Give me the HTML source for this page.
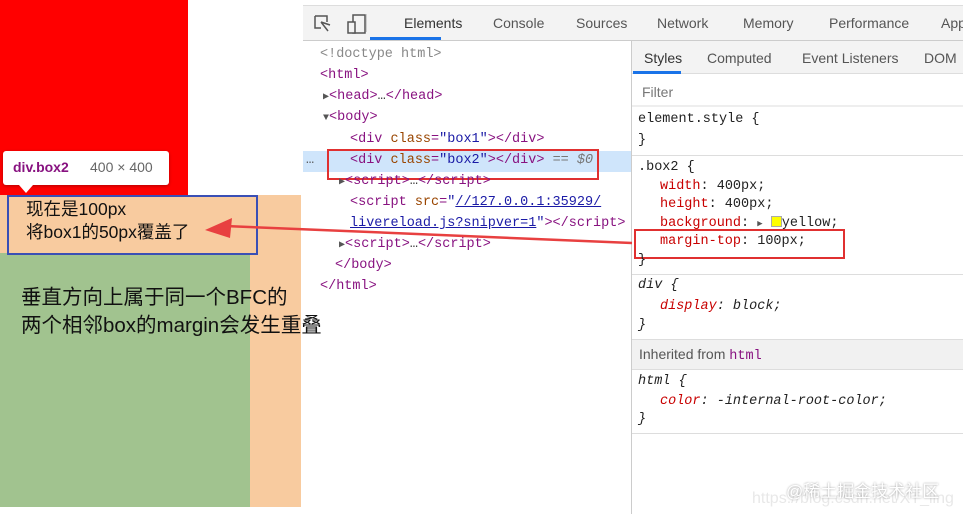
<!DOCTYPE html><html><head><style>
*{margin:0;padding:0;box-sizing:border-box}
body{width:963px;height:514px;position:relative;background:#fff;font-family:"Liberation Sans","Noto Sans CJK SC",sans-serif;overflow:hidden}
.a{position:absolute;white-space:nowrap}
.m{font-family:"Liberation Mono","DejaVu Sans Mono",monospace;font-size:13.5px}
.t{color:#881280}.at{color:#994500}.v{color:#1a1aa6}.g{color:#888}
.p{color:#c80000}
.tab{font-size:14px;color:#555;top:15px}
</style></head><body>
<div class="a" style="left:0;top:0;width:188px;height:196px;background:#f00"></div>
<div class="a" style="left:0;top:195px;width:301px;height:312px;background:#f8cb9f"></div>
<div class="a" style="left:0;top:253px;width:250px;height:254px;background:#a1c38f"></div>
<div class="a" style="left:3px;top:151px;width:166px;height:34px;background:#fff;border-radius:3px;box-shadow:0 1px 3px rgba(0,0,0,.3)"></div>
<div class="a" style="left:19px;top:185px;width:0;height:0;border-left:7px solid transparent;border-right:7px solid transparent;border-top:8px solid #fff"></div>
<div class="a" style="left:13px;top:159px;font-size:14px;font-weight:bold;color:#881280">div.box2</div>
<div class="a" style="left:90px;top:159px;font-size:14px;color:#666">400 × 400</div>
<div class="a" style="left:7px;top:195px;width:251px;height:60px;border:2px solid #3a4fb5"></div>
<div class="a" style="left:26px;top:198px;font-size:17.5px;line-height:23px;color:#111">现在是100px<br>将box1的50px覆盖了</div>
<div class="a" style="left:21px;top:284px;font-size:20.5px;line-height:28px;color:#111">垂直方向上属于同一个BFC的<br>两个相邻box的margin会发生重叠</div>
<!-- devtools -->
<div class="a" style="left:303px;top:5px;width:660px;height:36px;background:#f3f3f3;border-top:1px solid #ddd;border-bottom:1px solid #ccc"></div>
<svg class="a" style="left:313px;top:14px" width="60" height="22"><path d="M2 2h12v6M2 2v12h6M8 8l7 9M8 8l9 3" stroke="#555" fill="none" stroke-width="1.5"/><rect x="40" y="1" width="12" height="18" stroke="#555" fill="none" stroke-width="1.5"/><rect x="35" y="8" width="7" height="11" stroke="#555" fill="#f3f3f3" stroke-width="1.5"/></svg>
<div class="a" style="left:366px;top:14px;width:1px;height:18px;background:#ccc"></div>
<div class="a tab" style="left:404px;color:#333">Elements</div>
<div class="a" style="left:370px;top:37px;width:71px;height:3px;background:#1a73e8"></div>
<div class="a tab" style="left:493px">Console</div>
<div class="a tab" style="left:576px">Sources</div>
<div class="a tab" style="left:657px">Network</div>
<div class="a tab" style="left:743px">Memory</div>
<div class="a tab" style="left:829px">Performance</div>
<div class="a tab" style="left:941px">App</div>
<div class="a" style="left:631px;top:41px;width:1px;height:473px;background:#ccc"></div>
<div class="m">
<div class="a g" style="left:320px;top:47px">&lt;!doctype html&gt;</div>
<div class="a t" style="left:320px;top:68px">&lt;html&gt;</div>
<div class="a t" style="left:323px;top:89px"><span style="color:#555;font-size:10px">▶</span>&lt;head&gt;<span style="color:#333">…</span>&lt;/head&gt;</div>
<div class="a t" style="left:323px;top:110px"><span style="color:#555;font-size:10px">▼</span>&lt;body&gt;</div>
<div class="a t" style="left:350px;top:132px">&lt;div <span class="at">class</span>=<span class="v">"box1"</span>&gt;&lt;/div&gt;</div>
<div class="a" style="left:303px;top:151px;width:328px;height:21px;background:#cfe5fb"></div>
<div class="a" style="left:306px;top:153px;color:#555">…</div>
<div class="a t" style="left:350px;top:153px">&lt;div <span class="at">class</span>=<span class="v">"box2"</span>&gt;&lt;/div&gt; <span style="color:#777">== <i>$0</i></span></div>
<div class="a" style="left:327px;top:149px;width:272px;height:31px;border:2px solid #e03030"></div>
<div class="a t" style="left:339px;top:174px"><span style="color:#555;font-size:10px">▶</span>&lt;script&gt;<span style="color:#333">…</span>&lt;/script&gt;</div>
<div class="a t" style="left:350px;top:195px">&lt;script <span class="at">src</span>=<span class="v">"<u>//127.0.0.1:35929/</u></span></div>
<div class="a t" style="left:350px;top:216px"><span class="v"><u>livereload.js?snipver=1</u>"</span>&gt;&lt;/script&gt;</div>
<div class="a t" style="left:339px;top:237px"><span style="color:#555;font-size:10px">▶</span>&lt;script&gt;<span style="color:#333">…</span>&lt;/script&gt;</div>
<div class="a t" style="left:335px;top:258px">&lt;/body&gt;</div>
<div class="a t" style="left:320px;top:279px">&lt;/html&gt;</div>
</div>
<svg class="a" style="left:0;top:0" width="963" height="514"><path d="M632 243 L225 226" stroke="#e84040" stroke-width="2.5"/><path d="M205 230 L232 218 L230 238 Z" fill="#e84040"/></svg>
<!-- styles -->
<div class="a" style="left:632px;top:41px;width:331px;height:33px;background:#f3f3f3;border-bottom:1px solid #ddd"></div>
<div class="a" style="left:644px;top:50px;font-size:14px;color:#333">Styles</div>
<div class="a" style="left:633px;top:71px;width:48px;height:3px;background:#1a73e8"></div>
<div class="a" style="left:707px;top:50px;font-size:14px;color:#555">Computed</div>
<div class="a" style="left:802px;top:50px;font-size:14px;color:#555">Event Listeners</div>
<div class="a" style="left:924px;top:50px;font-size:14px;color:#555">DOM</div>
<div class="a" style="left:642px;top:84px;font-size:14px;color:#777">Filter</div>
<div class="a" style="left:632px;top:105px;width:331px;height:2px;background:#eee"></div>
<div class="m" style="color:#222">
<div class="a" style="left:638px;top:112px">element.style {</div>
<div class="a" style="left:638px;top:133px">}</div>
<div class="a" style="left:632px;top:155px;width:331px;height:1px;background:#ddd"></div>
<div class="a" style="left:638px;top:160px">.box2 {</div>
<div class="a" style="left:660px;top:179px"><span class="p">width</span>: 400px;</div>
<div class="a" style="left:660px;top:197px"><span class="p">height</span>: 400px;</div>
<div class="a" style="left:660px;top:216px"><span class="p">background</span>: <span style="font-size:9px;color:#555">▶</span> <span style="display:inline-block;width:11px;height:11px;background:#ff0;border:1px solid #aaa;vertical-align:-1px"></span>yellow;</div>
<div class="a" style="left:660px;top:234px"><span class="p">margin-top</span>: 100px;</div>
<div class="a" style="left:634px;top:229px;width:211px;height:30px;border:2px solid #e03030"></div>
<div class="a" style="left:638px;top:253px">}</div>
<div class="a" style="left:632px;top:274px;width:331px;height:1px;background:#ddd"></div>
<div class="a" style="left:638px;top:278px;font-style:italic">div {</div>
<div class="a" style="left:660px;top:299px;font-style:italic"><span class="p">display</span>: block;</div>
<div class="a" style="left:638px;top:318px;font-style:italic">}</div>
<div class="a" style="left:632px;top:339px;width:331px;height:31px;background:#f1f1f1;border-top:1px solid #ddd;border-bottom:1px solid #ddd"></div>
<div class="a" style="left:639px;top:346px;font-family:'Liberation Sans',sans-serif;font-size:14px;color:#555">Inherited from <span class="m t">html</span></div>
<div class="a" style="left:638px;top:374px;font-style:italic">html {</div>
<div class="a" style="left:660px;top:394px;font-style:italic"><span class="p">color</span>: -internal-root-color;</div>
<div class="a" style="left:638px;top:412px;font-style:italic">}</div>
<div class="a" style="left:632px;top:433px;width:331px;height:1px;background:#ddd"></div>
</div>
<div class="a" style="left:752px;top:490px;font-size:16px;color:#e8e8e8">https://blog.csdn.net/XT_ling</div>
<div class="a" style="left:786px;top:477px;font-size:17px;color:#fff;text-shadow:0 0 2px #999">@稀土掘金技术社区</div>
</body></html>
